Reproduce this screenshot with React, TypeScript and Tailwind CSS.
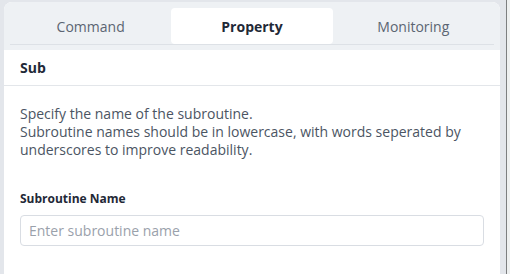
import React, { useState } from 'react';

const tabs = ['Command', 'Property', 'Monitoring'];

export default function App() {
  const [active, setActive] = useState('Property');

  return (
    <div className="flex h-[274px] w-[510px] overflow-hidden bg-[#e3e6eb] font-['Open_Sans','Noto_Sans',sans-serif]">
      <div className="ml-1 mt-0.5 flex w-[496px] flex-col rounded-t-lg bg-white">
        <div className="rounded-t-lg bg-[#eef1f4] px-1.5 pt-1.5 pb-[5px]">
          <div className="grid grid-cols-3 border-b border-[#dde1e6]">
            {tabs.map((t) => (
              <button
                key={t}
                onClick={() => setActive(t)}
                className={
                  t === active
                    ? 'h-9 rounded bg-white text-[14px] font-bold text-[#1f2937]'
                    : 'h-9 rounded text-[14px] text-[#5b6572]'
                }
              >
                {t}
              </button>
            ))}
          </div>
        </div>

        <div className="flex h-9 items-center border-b border-[#e3e6ea] px-4">
          <span className="text-[14px] font-bold text-[#1f2937]">Sub</span>
        </div>

        <div className="px-4 pt-[19px]">
          <p className="text-[14px] leading-[18px] text-[#4b5563]">
            Specify the name of the subroutine.
            <br />
            Subroutine names should be in lowercase, with words seperated by underscores to improve readability.
          </p>

          <label className="mt-[31px] block text-[12px] font-bold text-[#1f2937]">Subroutine Name</label>
          <input
            type="text"
            placeholder="Enter subroutine name"
            className="mt-[7px] h-[31px] w-[464px] rounded border border-[#d9dde3] px-2 text-[14px] text-[#1f2937] outline-none placeholder:text-[#9aa1ab]"
          />
        </div>
      </div>
      <div className="ml-1.5 w-px bg-[#7d7f80]" />
      <div className="flex-1 bg-[#eef0f0]" />
    </div>
  );
}
